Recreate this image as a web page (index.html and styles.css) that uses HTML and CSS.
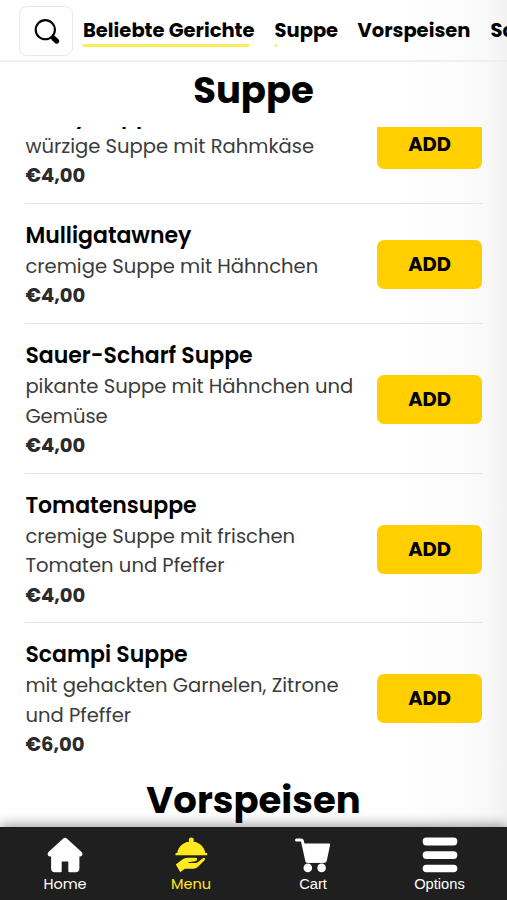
FILE: index.html
```html
<!DOCTYPE html>
<html lang="de">
<head>
<meta charset="utf-8">
<meta name="viewport" content="width=device-width, initial-scale=1">
<title>Menu</title>
<link rel="stylesheet" href="styles.css">
</head>
<body>
<div class="app">
  <header class="topbar">
    <button class="search" aria-label="Suche">
      <svg width="28" height="28" viewBox="0 0 28 28"><circle cx="12.3" cy="11.7" r="9.6" fill="none" stroke="#000" stroke-width="2.1"/><path d="M18.6 18.1l2 2" stroke="#000" stroke-width="2.4"/><path d="M20.7 20.3l3 2.8" stroke="#000" stroke-width="5.2" stroke-linecap="round"/></svg>
    </button>
    <nav class="tabs">
      <a class="tab tab-popular">Beliebte Gerichte</a>
      <a class="tab tab-soup">Suppe</a>
      <a class="tab tab-starters">Vorspeisen</a>
      <a class="tab">Salate</a>
    </nav>
  </header>
  <h2 class="heading heading-soup">Suppe</h2>
  <main class="scroll">
    <ul class="list">
      <li class="item"><div class="info"><h3>Curry Suppe</h3><p>würzige Suppe mit Rahmkäse</p><strong>€4,00</strong></div><button class="add">ADD</button></li>
      <li class="item"><div class="info"><h3>Mulligatawney</h3><p>cremige Suppe mit Hähnchen</p><strong>€4,00</strong></div><button class="add">ADD</button></li>
      <li class="item"><div class="info"><h3>Sauer-Scharf Suppe</h3><p>pikante Suppe mit Hähnchen und<br>Gemüse</p><strong>€4,00</strong></div><button class="add">ADD</button></li>
      <li class="item"><div class="info"><h3>Tomatensuppe</h3><p>cremige Suppe mit frischen<br>Tomaten und Pfeffer</p><strong>€4,00</strong></div><button class="add">ADD</button></li>
      <li class="item"><div class="info"><h3>Scampi Suppe</h3><p>mit gehackten Garnelen, Zitrone<br>und Pfeffer</p><strong>€6,00</strong></div><button class="add">ADD</button></li>
    </ul>
    <h2 class="heading">Vorspeisen</h2>
  </main>
  <footer class="bottombar">
    <a class="dock"><svg width="36" height="36" viewBox="0 0 36 36"><path fill="#fff" d="M16.2 1.4q1.8-1.5 3.6 0L34.6 15q1.3 1.6.6 3.2-.7 1.2-2.3 1.2h-.5v12.200q0 3.700-3.700 3.700h-6.300q-1.100 0-1.100-1.100v-9.600H14.700v9.600q0 1.100-1.100 1.100H7.800q-3.700 0-3.700-3.700V19.400h-.9q-1.700 0-2.300-1.200-.7-1.600.6-3.200z"/></svg><span>Home</span></a>
    <a class="dock active"><svg width="36" height="36" viewBox="0 0 36 36"><g fill="#ffe91f"><circle cx="18.3" cy="3" r="2.500"/><path d="M4.200 16.200C5.200 9.300 10.800 4.500 18.300 4.500s13.100 4.800 14.100 11.700zM2.500 15.900h31.700v2.300H2.500z"/><path d="M2.800 27.600l6.600-5.100q2-1.700 4.900-1.700h8.300q1.700 0 1.700 1.500 0 1.900-3.800 2.300l-4.700.6q-.8.200-.7.800l7.400.1q1.300 0 2.300-.8l5-4.100q1.400-.8 2.100.3.500.9-.6 2.100l-6.500 6.500q-1.800 1.600-4.500 1.600h-8.600L7.300 35.300z"/></g></svg><span>Menu</span></a>
    <a class="dock dock-cart"><svg width="36" height="36" viewBox="0 0 36 36"><path d="M1.500 3h4.700q1 0 1.200 1l4.500 20.300h16" fill="none" stroke="#fff" stroke-width="3" stroke-linejoin="round" stroke-linecap="round"/><path fill="#fff" d="M7.600 6.600h26.500q1.200 0 1 1.200l-3.200 15.500q-.4 2.500-2.500 2.500H13.900q-2 0-2.400-2z"/><circle cx="12.800" cy="30.900" r="4.300" fill="#fff"/><circle cx="26.600" cy="30.900" r="4.300" fill="#fff"/></svg><span>Cart</span></a>
    <a class="dock dock-options"><svg width="36" height="36" viewBox="0 0 36 36"><g fill="#fff"><rect x=".7" y=".6" width="34.600" height="7.800" rx="3.700"/><rect x=".7" y="14.200" width="34.600" height="7.800" rx="3.700"/><rect x=".7" y="27.800" width="34.600" height="7.400" rx="3.700"/></g></svg><span>Options</span></a>
  </footer>
</div>
</body>
</html>
```
FILE: styles.css
```css
* { box-sizing: border-box; }
body { margin: 0; font-family: Poppins, "Liberation Sans", sans-serif; color: #000; overflow: hidden; }
h2, h3, p, ul { margin: 0; padding: 0; }
button { font: inherit; color: inherit; padding: 0; }
.app { width: 507px; height: 900px; display: flex; flex-direction: column; overflow: hidden; background: linear-gradient(90deg, #fff 0, #fff 400px, #fbfbfb 470px, #f8f8f8 490px, #f2f2f2 507px); }
.topbar { flex: none; height: 62px; display: flex; align-items: flex-start; padding: 6px 0 0 19px; border-bottom: 2px solid #eee; overflow: hidden; }
.search { flex: none; width: 54px; height: 50px; display: flex; align-items: center; justify-content: center; padding: 2px 0 0 2px; background: #fff; border: 1.5px solid #e8e8e8; border-radius: 8px; }
.tabs { display: flex; gap: 20px; margin-left: 10px; }
.tab { flex: none; height: 41px; padding-top: 10px; font-size: 19.5px; line-height: 30px; font-weight: 700; white-space: nowrap; background: linear-gradient(#fbec5a, #fbec5a) left bottom / 0 3px no-repeat; }
.tab-popular { width: 172px; background-size: 166px 3px; }
.tab-soup { width: 63px; margin-left: -.5px; background-size: 2px 3px; }
.tab-starters { width: 113px; }
.heading { flex: none; text-align: center; font-weight: 700; font-size: 37px; line-height: 56px; }
.heading-soup { height: 65px; }
.scroll { flex: 1; min-height: 0; overflow: hidden; padding: 0 25px; }
.list { list-style: none; margin-top: -43.4px; }
.item { display: flex; align-items: center; justify-content: space-between; padding: 16px 0 12.2px; border-bottom: 1px solid #e4e4e4; }
.item:last-child { border-bottom: 0; }
.info { padding-left: .4px; font-size: 19.57px; line-height: 29.4px; color: #3b3b3b; white-space: nowrap; }
.info h3 { margin-bottom: 1.2px; font-size: 22px; line-height: 31px; font-weight: 600; color: #000; }
.info strong { display: block; font-weight: 700; color: #2b2b2b; }
.add { flex: none; width: 105px; height: 49px; margin-bottom: 1px; border: 0; border-radius: 7px; background: #ffcf00; font-size: 19.5px; font-weight: 700; }
.bottombar { flex: none; position: relative; height: 73px; display: flex; background: #1f1f1f; box-shadow: 0 -2px 12px rgba(0,0,0,.4); padding: 10px 2px 0; }
.dock { width: 126px; flex: none; display: flex; flex-direction: column; align-items: center; color: #fff; font-size: 14.5px; line-height: 22px; }
.dock svg { flex: none; }
.dock-cart { width: 118px; }
.dock-options { width: 135px; }
.dock-cart, .dock-options { font-family: "Liberation Sans", Arial, sans-serif; font-size: 14.7px; }
.active { color: #ffe91f; }
```
